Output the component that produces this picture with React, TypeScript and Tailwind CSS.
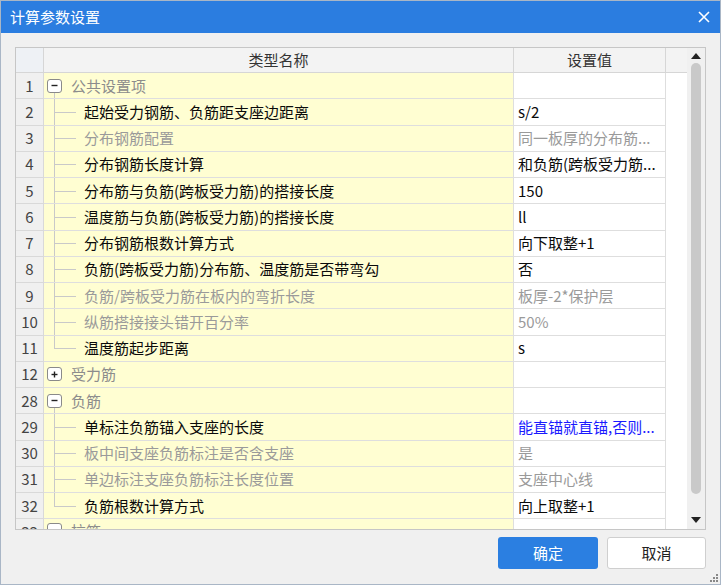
import React from 'react';

type Row = {
  no: number;
  kind: 'group' | 'child';
  name: string;
  value?: string;
  muted?: boolean;
  blue?: boolean;
  open?: boolean;
  last?: boolean;
};

const rows: Row[] = [
  { no: 1, kind: 'group', name: '公共设置项', open: true },
  { no: 2, kind: 'child', name: '起始受力钢筋、负筋距支座边距离', value: 's/2' },
  { no: 3, kind: 'child', name: '分布钢筋配置', value: '同一板厚的分布筋...', muted: true },
  { no: 4, kind: 'child', name: '分布钢筋长度计算', value: '和负筋(跨板受力筋...' },
  { no: 5, kind: 'child', name: '分布筋与负筋(跨板受力筋)的搭接长度', value: '150' },
  { no: 6, kind: 'child', name: '温度筋与负筋(跨板受力筋)的搭接长度', value: 'll' },
  { no: 7, kind: 'child', name: '分布钢筋根数计算方式', value: '向下取整+1' },
  { no: 8, kind: 'child', name: '负筋(跨板受力筋)分布筋、温度筋是否带弯勾', value: '否' },
  { no: 9, kind: 'child', name: '负筋/跨板受力筋在板内的弯折长度', value: '板厚-2*保护层', muted: true },
  { no: 10, kind: 'child', name: '纵筋搭接接头错开百分率', value: '50%', muted: true },
  { no: 11, kind: 'child', name: '温度筋起步距离', value: 's', last: true },
  { no: 12, kind: 'group', name: '受力筋', open: false },
  { no: 28, kind: 'group', name: '负筋', open: true },
  { no: 29, kind: 'child', name: '单标注负筋锚入支座的长度', value: '能直锚就直锚,否则...', blue: true },
  { no: 30, kind: 'child', name: '板中间支座负筋标注是否含支座', value: '是', muted: true },
  { no: 31, kind: 'child', name: '单边标注支座负筋标注长度位置', value: '支座中心线', muted: true },
  { no: 32, kind: 'child', name: '负筋根数计算方式', value: '向上取整+1', last: true },
];

const ToggleBox = ({ open }: { open: boolean }) => (
  <span className="relative z-10 flex h-[14px] w-[15px] shrink-0 items-center justify-center rounded-[3px] border border-[#8a8a8a] bg-white">
    <svg width="9" height="9" viewBox="0 0 9 9">
      <path d="M1.5 4.5h6" stroke="#222" strokeWidth="1.4" />
      {!open && <path d="M4.5 1.5v6" stroke="#222" strokeWidth="1.4" />}
    </svg>
  </span>
);

const NameCell = ({ row }: { row: Row }) => {
  if (row.kind === 'group') {
    return (
      <div className="relative flex h-full items-center pl-[3px]">
        <ToggleBox open={!!row.open} />
        {row.open && <span className="absolute left-[10px] top-[19px] bottom-0 w-px bg-[#c9c9c9]" />}
        <span className="ml-[9px] whitespace-nowrap text-[#8c8c8c]">{row.name}</span>
      </div>
    );
  }
  return (
    <div className="relative flex h-full items-center">
      <span className={`absolute left-[10px] top-0 w-px bg-[#c9c9c9] ${row.last ? 'h-1/2' : 'h-full'}`} />
      <span className="absolute left-[10px] top-1/2 h-px w-[22px] bg-[#c9c9c9]" />
      <span className={`pl-[40px] whitespace-nowrap ${row.muted ? 'text-[#9a9a9a]' : 'text-[#0a0a0a]'}`}>{row.name}</span>
    </div>
  );
};

export default function App() {
  return (
    <div className="flex h-[585px] w-[721px] flex-col overflow-hidden border border-[#a9b6c6] bg-[#f0f0f0] font-['Noto_Sans_CJK_SC','Microsoft_YaHei',sans-serif] text-[15px]">
      <div className="flex h-[32px] shrink-0 items-center justify-between bg-[#2b7de0] pl-[9px] pr-[10px] text-white">
        <span className="text-[15px]">计算参数设置</span>
        <svg width="12" height="12" viewBox="0 0 12 12">
          <path d="M1 1l10 10M11 1L1 11" stroke="#fff" strokeWidth="1.6" />
        </svg>
      </div>

      <div className="flex flex-1 flex-col px-[14px] pt-[14px]">
        <div className="flex h-[483px] border border-[#c6c6c6] bg-white">
          <div className="flex min-w-0 flex-1 flex-col overflow-hidden">
            <div className="flex h-[25px] shrink-0 border-b border-[#d6d6d6] bg-[#f3f3f3] leading-[24px]">
              <div className="w-[28px] shrink-0 border-r border-[#d6d6d6] bg-[#eef1f5]" />
              <div className="flex w-[470px] shrink-0 items-center justify-center border-r border-[#d6d6d6] text-[#333]">类型名称</div>
              <div className="flex w-[152px] shrink-0 items-center justify-center border-r border-[#d6d6d6] text-[#333]">设置值</div>
              <div className="flex-1" />
            </div>
            {rows.map((row) => (
              <div key={row.no} className="flex h-[26.25px] shrink-0 leading-[22px]">
                <div className="flex w-[28px] shrink-0 items-center justify-center border-r border-b border-[#d9d9d9] bg-[#f0f0f0] text-[#444]">
                  {row.no}
                </div>
                <div className="w-[470px] shrink-0 border-r border-b border-[#dedede] bg-[#fffed2]">
                  <NameCell row={row} />
                </div>
                <div
                  className={`flex w-[152px] shrink-0 items-center whitespace-nowrap border-r border-b border-[#dedede] pl-[4px] ${
                    row.blue ? 'text-[#1a1aff]' : row.muted ? 'text-[#9a9a9a]' : 'text-[#0a0a0a]'
                  }`}
                >
                  {row.value}
                </div>
                <div className="flex-1" />
              </div>
            ))}
            <div className="flex h-[26px] shrink-0 leading-[22px]">
              <div className="flex w-[28px] shrink-0 items-start justify-center border-r border-[#d9d9d9] bg-[#f0f0f0] pt-[2px] text-[#444]">33</div>
              <div className="flex w-[470px] shrink-0 items-start border-r border-[#dedede] bg-[#fffed2] pl-[3px] pt-[4px]">
                <ToggleBox open />
                <span className="ml-[9px] -mt-[3px] text-[#8c8c8c]">拉筋</span>
              </div>
              <div className="w-[152px] shrink-0 border-r border-[#dedede]" />
              <div className="flex-1" />
            </div>
          </div>

          <div className="flex w-[18px] shrink-0 flex-col items-center bg-[#f0f0f0] py-[4px]">
            <svg width="10" height="6" viewBox="0 0 10 6" className="mt-[1px]">
              <path d="M0 6L5 0l5 6z" fill="#222" />
            </svg>
            <div className="mt-[4px] h-[431px] w-[10px] rounded-full bg-[#c9c9c9]" />
            <div className="flex-1" />
            <svg width="10" height="6" viewBox="0 0 10 6" className="mb-[2px]">
              <path d="M0 0h10L5 6z" fill="#222" />
            </svg>
          </div>
        </div>

        <div className="mt-[7px] flex justify-end gap-[9px]">
          <button className="h-[32px] w-[100px] rounded-[3px] bg-[#2b7fe1] text-white">确定</button>
          <button className="h-[32px] w-[99px] rounded-[3px] border border-[#cfcfcf] bg-white text-[#222]">取消</button>
        </div>

        <div className="-mr-[12px] mt-auto mb-[2px] flex justify-end">
          <svg width="8" height="8" viewBox="0 0 8 8">
            <rect x="6" y="0" width="2" height="2" fill="#888" />
            <rect x="3" y="3" width="2" height="2" fill="#888" />
            <rect x="6" y="3" width="2" height="2" fill="#888" />
            <rect x="0" y="6" width="2" height="2" fill="#888" />
            <rect x="3" y="6" width="2" height="2" fill="#888" />
            <rect x="6" y="6" width="2" height="2" fill="#888" />
          </svg>
        </div>
      </div>
    </div>
  );
}
